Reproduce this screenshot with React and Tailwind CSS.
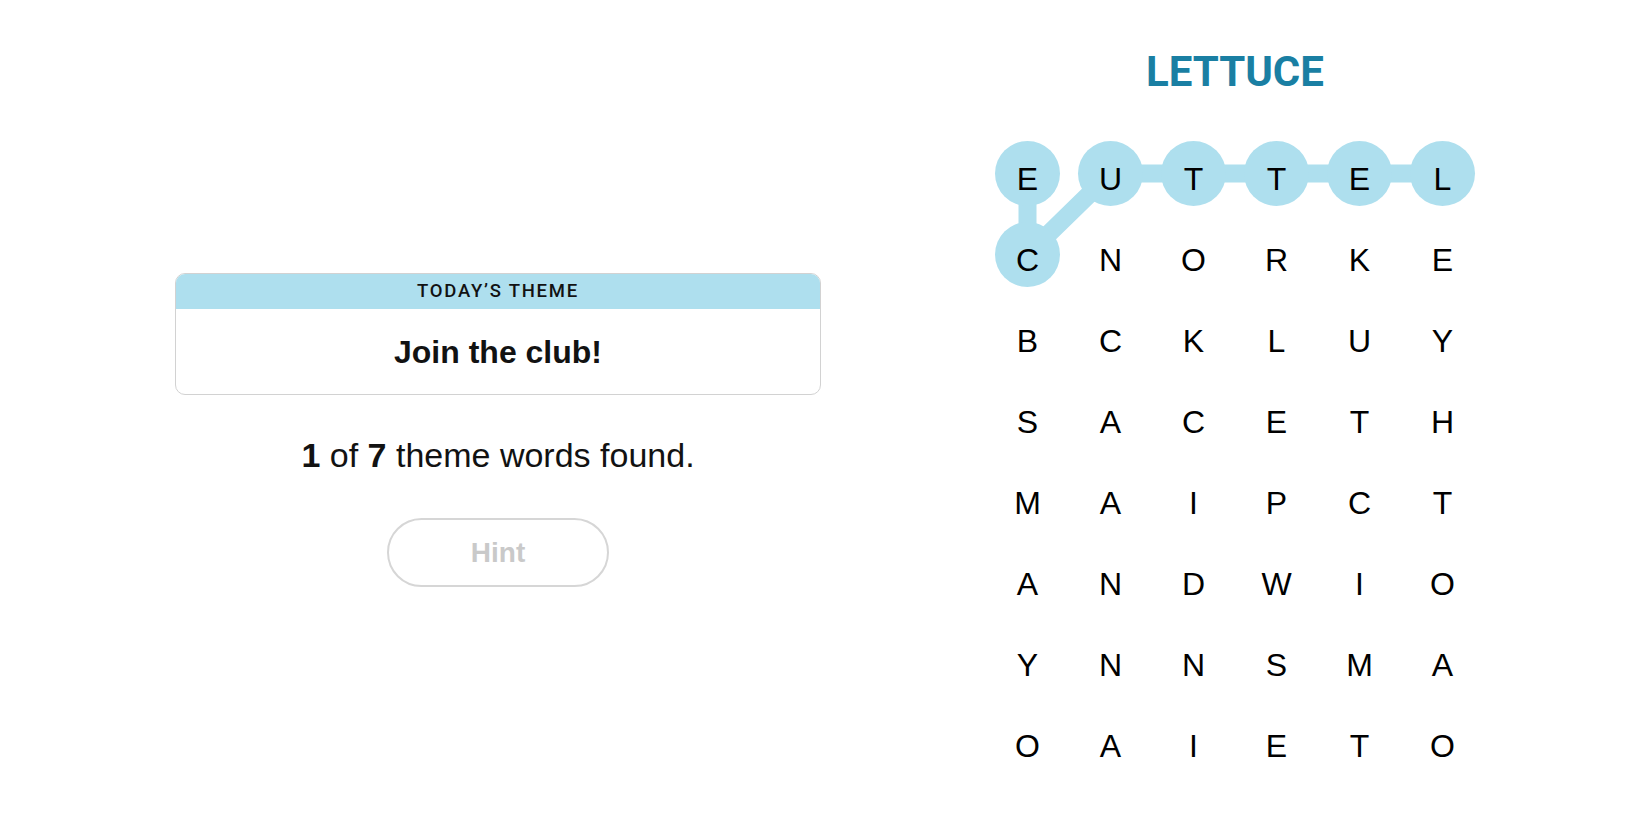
const grid = [
  ["E", "U", "T", "T", "E", "L"],
  ["C", "N", "O", "R", "K", "E"],
  ["B", "C", "K", "L", "U", "Y"],
  ["S", "A", "C", "E", "T", "H"],
  ["M", "A", "I", "P", "C", "T"],
  ["A", "N", "D", "W", "I", "O"],
  ["Y", "N", "N", "S", "M", "A"],
  ["O", "A", "I", "E", "T", "O"],
];

// found word path, as [row, col]
const found = [[0, 5], [0, 4], [0, 3], [0, 2], [0, 1], [1, 0], [0, 0]];

const CELL_W = 83;
const CELL_H = 81;

const cx = (c) => CELL_W / 2 + c * CELL_W;
const cy = (r) => CELL_H / 2 + r * CELL_H - 5;

const Highlight = () => {
  const pts = found.map(([r, c]) => `${cx(c)},${cy(r)}`).join(" ");
  return (
    <svg
      className="absolute inset-0 pointer-events-none"
      width={CELL_W * 6}
      height={CELL_H * 8}
    >
      <polyline
        points={pts}
        fill="none"
        stroke="#aedfee"
        strokeWidth="18"
        strokeLinejoin="round"
        strokeLinecap="round"
      />
      {found.map(([r, c]) => (
        <circle key={`${r}-${c}`} cx={cx(c)} cy={cy(r)} r="32.5" fill="#aedfee" />
      ))}
    </svg>
  );
};

const ThemeCard = () => (
  <div className="w-full rounded-[10px] border border-[#d2d2d2] overflow-hidden">
    <div className="h-[35px] bg-[#aedfee] flex items-center justify-center">
      <span className="font-['Roboto',sans-serif] font-medium text-[18.5px] leading-none tracking-[0.095em] text-[#121212]">
        TODAY’S THEME
      </span>
    </div>
    <div className="h-[85px] flex items-center justify-center">
      <span className="font-['Liberation_Sans',Arial,sans-serif] font-bold text-[32px] leading-[40px] text-[#121212]">
        Join the club!
      </span>
    </div>
  </div>
);

export default function App() {
  return (
    <main className="w-full h-[825px] bg-white flex items-start pl-[175px] overflow-hidden">
      <section className="w-[646px] pt-[273px] flex flex-col items-center">
        <ThemeCard />
        <p className="mt-[40px] h-[40px] leading-[40px] text-[34px] text-[#121212] font-['Liberation_Sans',Arial,sans-serif]">
          <b>1</b> of <b>7</b> theme words found.
        </p>
        <button className="mt-[43px] w-[222px] h-[69px] rounded-full border-2 border-[#d6d6d6] bg-white flex items-center justify-center">
          <span className="font-['Liberation_Sans',Arial,sans-serif] font-bold text-[28px] text-[#c9c9c9]">
            Hint
          </span>
        </button>
      </section>

      <section className="ml-[165px] w-[498px] pt-[48px] flex flex-col items-center">
        <h1 className="h-[48px] leading-[48px] font-['Roboto',sans-serif] font-bold text-[42px] text-[#1a7fa3]">
          LETTUCE
        </h1>
        <div className="relative mt-[42px] w-[498px]">
          <Highlight />
          <div className="relative grid grid-cols-6">
            {grid.flat().map((ch, i) => (
              <div
                key={i}
                className="h-[81px] flex items-center justify-center font-['Liberation_Sans',Arial,sans-serif] text-[32px] text-black"
              >
                {ch}
              </div>
            ))}
          </div>
        </div>
      </section>
    </main>
  );
}
